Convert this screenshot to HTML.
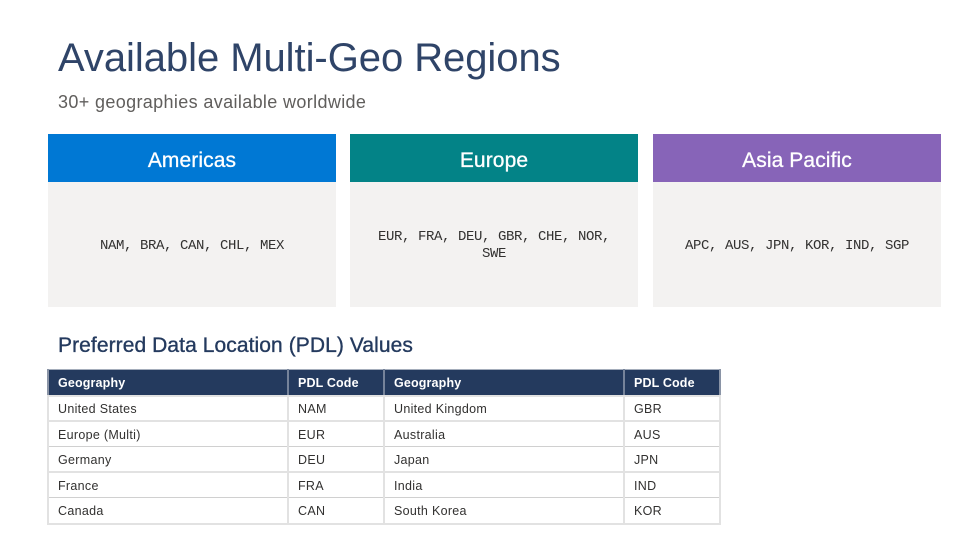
<!DOCTYPE html>
<html><head><meta charset="utf-8">
<style>
html,body{margin:0;padding:0;background:#fff;width:960px;height:540px;overflow:hidden}
body{position:relative;font-family:"Liberation Sans",sans-serif}
.a{position:absolute;white-space:nowrap}
.h{position:absolute;top:134px;height:48px;width:288px;color:#fff;text-align:center;font-size:21px;line-height:54px;font-weight:400;-webkit-text-stroke:.3px #fff;letter-spacing:.1px}
.b{position:absolute;top:182px;height:125px;width:288px;background:#f3f2f1;color:#323130;text-align:center;font-family:"Liberation Mono",monospace;font-size:14px;letter-spacing:-.4px;line-height:17px}
.b div{position:absolute;left:20px;right:20px}
.t{position:absolute;white-space:nowrap;font-size:12.5px;line-height:16px;color:#323130;letter-spacing:.3px}
.th{color:#fff;font-weight:700;letter-spacing:.15px}
.r{position:absolute;background:#e2e2e2}
</style></head><body>
<div class="a" style="left:58px;top:33px;font-size:40px;line-height:50px;color:#2f4468;letter-spacing:-.05px">Available Multi-Geo Regions</div>
<div class="a" style="left:58px;top:91px;font-size:18px;line-height:22px;color:#605e5c;letter-spacing:.36px">30+ geographies available worldwide</div>
<div class="h" style="left:48px;background:#0078d4">Americas</div>
<div class="h" style="left:350px;background:#038387">Europe</div>
<div class="h" style="left:653px;background:#8764b8">Asia Pacific</div>
<div class="b" style="left:48px"><div style="top:56px">NAM, BRA, CAN, CHL, MEX</div></div>
<div class="b" style="left:350px"><div style="top:47px">EUR, FRA, DEU, GBR, CHE, NOR,<br>SWE</div></div>
<div class="b" style="left:653px"><div style="top:56px">APC, AUS, JPN, KOR, IND, SGP</div></div>
<div class="a" style="left:58px;top:332px;font-size:21px;line-height:27px;color:#243a5e;font-weight:400;-webkit-text-stroke:.35px #243a5e;letter-spacing:.08px">Preferred Data Location (PDL) Values</div>

<div class="r" style="left:48px;top:370px;width:672px;height:25px;background:#243a5e"></div>
<div class="r" style="left:47px;top:369px;width:674px;height:1px;background:#a4adbb"></div>
<div class="r" style="left:47px;top:395px;width:674px;height:2px"></div>
<div class="r" style="left:47px;top:420px;width:674px;height:2px"></div>
<div class="r" style="left:47px;top:446px;width:674px;height:1px;background:#d0d0d0"></div>
<div class="r" style="left:47px;top:471px;width:674px;height:2px"></div>
<div class="r" style="left:47px;top:497px;width:674px;height:1px;background:#d0d0d0"></div>
<div class="r" style="left:47px;top:523px;width:674px;height:2px"></div>
<div class="r" style="left:47px;top:395px;width:2px;height:130px"></div>
<div class="r" style="left:287px;top:395px;width:2px;height:130px"></div>
<div class="r" style="left:383px;top:395px;width:2px;height:130px"></div>
<div class="r" style="left:623px;top:395px;width:2px;height:130px"></div>
<div class="r" style="left:719px;top:395px;width:2px;height:130px"></div>
<div class="r" style="left:47px;top:369px;width:2px;height:26px;background:#8a94a6"></div>
<div class="r" style="left:287px;top:369px;width:2px;height:26px;background:#76839a"></div>
<div class="r" style="left:383px;top:369px;width:2px;height:26px;background:#76839a"></div>
<div class="r" style="left:623px;top:369px;width:2px;height:26px;background:#76839a"></div>
<div class="r" style="left:719px;top:369px;width:2px;height:26px;background:#8a94a6"></div>

<div class="t th" style="left:58px;top:375px">Geography</div><div class="t th" style="left:298px;top:375px">PDL Code</div><div class="t th" style="left:394px;top:375px">Geography</div><div class="t th" style="left:634px;top:375px">PDL Code</div>
<div class="t" style="left:58px;top:401px">United States</div><div class="t" style="left:298px;top:401px">NAM</div><div class="t" style="left:394px;top:401px">United Kingdom</div><div class="t" style="left:634px;top:401px">GBR</div>
<div class="t" style="left:58px;top:427px">Europe (Multi)</div><div class="t" style="left:298px;top:427px">EUR</div><div class="t" style="left:394px;top:427px">Australia</div><div class="t" style="left:634px;top:427px">AUS</div>
<div class="t" style="left:58px;top:452px">Germany</div><div class="t" style="left:298px;top:452px">DEU</div><div class="t" style="left:394px;top:452px">Japan</div><div class="t" style="left:634px;top:452px">JPN</div>
<div class="t" style="left:58px;top:478px">France</div><div class="t" style="left:298px;top:478px">FRA</div><div class="t" style="left:394px;top:478px">India</div><div class="t" style="left:634px;top:478px">IND</div>
<div class="t" style="left:58px;top:503px">Canada</div><div class="t" style="left:298px;top:503px">CAN</div><div class="t" style="left:394px;top:503px">South Korea</div><div class="t" style="left:634px;top:503px">KOR</div>
</body></html>
